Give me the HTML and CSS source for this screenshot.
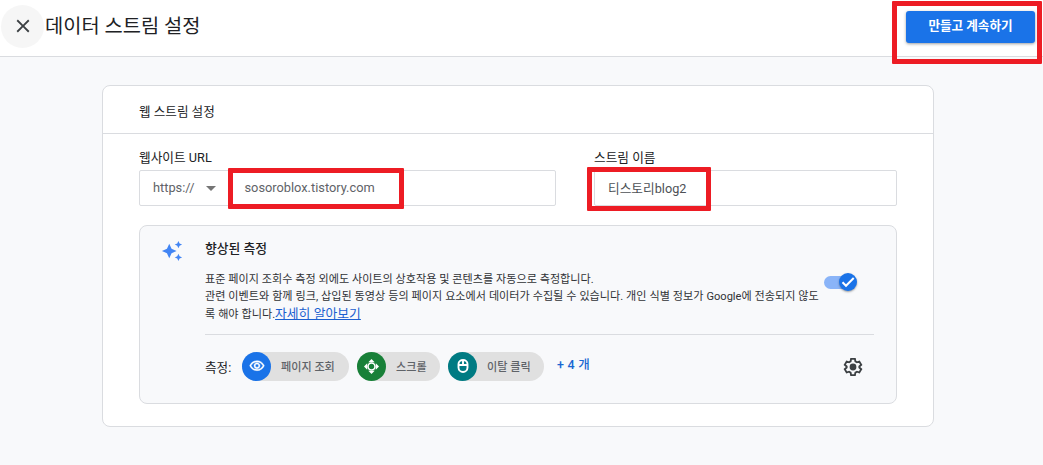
FILE: index.html
```
<!DOCTYPE html>
<html lang="ko">

<head>
    <meta charset="UTF-8">
    <meta name="viewport" content="width=device-width, initial-scale=1.0">
    <title>데이터 스트림 설정</title>
    <link rel="stylesheet" href="styles.css">
</head>

<body>
    <div class="header">
        <button class="closeBtn" aria-label="닫기">
            <svg width="24" height="24" viewBox="0 0 24 24"><path d="M19 6.41L17.59 5 12 10.59 6.41 5 5 6.41 10.59 12 5 17.59 6.41 19 12 13.41 17.59 19 19 17.59 13.41 12z"/></svg>
        </button>
        <h1>데이터 스트림 설정</h1>
        <button class="createBtn">만들고 계속하기<span class="mark markBtn"></span></button>
    </div>

    <div class="card">
        <div class="cardHead">웹 스트림 설정</div>

        <div class="cardBody">
            <div class="fields">
                <div class="field fieldUrl">
                    <label>웹사이트 URL</label>
                    <div class="inputBox">
                        <span class="scheme">https://</span>
                        <span class="arrow"></span>
                        <span class="url">sosoroblox.tistory.com</span>
                        <span class="mark markUrl"></span>
                    </div>
                </div>
                <div class="field fieldName">
                    <label>스트림 이름</label>
                    <div class="inputBox">
                        <span class="streamName">티스토리blog2</span>
                        <span class="mark markName"></span>
                    </div>
                </div>
            </div>

            <div class="panel">
                <svg class="sparkle" width="24" height="24" viewBox="0 0 24 24"><path d="M19 9l1.25-2.75L23 5l-2.75-1.25L19 1l-1.25 2.75L15 5l2.75 1.25L19 9zm-7.5.5L9 4 6.5 9.500 1 12l5.500 2.500L9 20l2.500-5.500L17 12l-5.500-2.500zM19 15l-1.250 2.750L15 19l2.750 1.250L19 23l1.250-2.750L23 19l-2.750-1.250L19 15z"/></svg>

                <div class="panelMain">
                    <div class="desc">
                        <div class="descText">
                            <h4>향상된 측정</h4>
                            <p>표준 페이지 조회수 측정 외에도 사이트의 상호작용 및 콘텐츠를 자동으로 측정합니다.</p>
                            <p class="wide">관련 이벤트와 함께 링크, 삽입된 동영상 등의 페이지 요소에서 데이터가 수집될 수 있습니다. 개인 식별 정보가 Google에 전송되지 않도<br>록 해야 합니다.<a href="#">자세히 알아보기</a></p>
                        </div>
                        <div class="toggle">
                            <span class="knob">
                                <svg width="18" height="18" viewBox="0 0 18 18"><path d="M3.500 9.300L7 12.800 14.700 5"/></svg>
                            </span>
                        </div>
                    </div>

                    <div class="measure">
                        <span class="measureLabel">측정:</span>
                        <div class="chip chipView">
                            <span class="chipIcon blue">
                                <svg width="16" height="16" viewBox="0 0 24 24"><path stroke="white" stroke-width=".6" d="M12 6c3.790 0 7.170 2.130 8.820 5.500C19.170 14.870 15.790 17 12 17s-7.170-2.130-8.820-5.500C4.830 8.130 8.210 6 12 6m0-2C7 4 2.730 7.110 1 11.500 2.730 15.890 7 19 12 19s9.270-3.110 11-7.500C21.270 7.110 17 4 12 4zm0 5a2.500 2.500 0 0 1 0 5 2.500 2.500 0 0 1 0-5m0-2c-2.480 0-4.500 2.020-4.500 4.500S9.520 16 12 16s4.500-2.020 4.500-4.500S14.480 7 12 7z"/></svg>
                            </span>
                            페이지 조회
                        </div>
                        <div class="chip chipScroll">
                            <span class="chipIcon green">
                                <svg width="15" height="15" viewBox="0 0 15 15"><path d="M7.500 0l3.200 3.200H4.300zM15 7.500l-3.200 3.200V4.300zM7.500 15l-3.200-3.200h6.400zM0 7.500l3.200-3.200v6.400z"/><circle cx="7.500" cy="7.500" r="3.500" fill="none" stroke="white" stroke-width="1.600"/></svg>
                            </span>
                            스크롤
                        </div>
                        <div class="chip chipClick">
                            <span class="chipIcon teal">
                                <svg width="12" height="14" viewBox="0 0 12 14"><path fill="none" stroke="white" stroke-width="1.900" d="M1.500 6V5A4.500 4 0 0 1 10.500 5v3.500A4.500 4.500 0 0 1 1.500 8.500zM1.500 6h9M6 1v5"/></svg>
                            </span>
                            이탈 클릭
                        </div>
                        <span class="more">+ 4 개</span>
                        <svg class="gear" width="24" height="24" viewBox="0 0 24 24"><path d="M9.900 3.200h4.200l.5 2.700 1.700 1 2.600-.9 2.100 3.600-2.100 1.800v1.200l2.100 1.800-2.100 3.600-2.600-.9-1.700 1-.5 2.700H9.900l-.5-2.700-1.700-1-2.600.9L3 14.400l2.100-1.800v-1.200L3 9.600 5.100 6l2.600.9 1.700-1z"/><circle cx="12" cy="12" r="3.700"/></svg>
                    </div>
                </div>
            </div>
        </div>
    </div>
</body>

</html>
```
FILE: styles.css
```
* {
    box-sizing: border-box;
}

body {
    margin: 0;
    height: 465px;
    overflow: hidden;
    background-color: #f8f9fb;
    color: #3c4043;
    font-family: Roboto, "Noto Sans CJK KR", sans-serif;
    white-space: nowrap;
}

button {
    padding: 0;
    border: 0;
    font-family: inherit;
}

.header {
    display: flex;
    align-items: center;
    height: 57px;
    padding: 0 8px 3px 1px;
    background-color: white;
    border-bottom: 1px solid #dadce0;
}

.closeBtn {
    display: flex;
    align-items: center;
    justify-content: center;
    width: 43px;
    height: 43px;
    border-radius: 50%;
    background-color: #f6f6f6;
}

.closeBtn svg {
    width: 22px;
    margin-top: -1px;
    fill: #3c4043;
}

.header h1 {
    margin: 1px 0 0 1px;
    font-size: 19.8px;
    font-weight: 400;
    line-height: 28px;
    color: #202124;
}

.createBtn {
    position: relative;
    width: 129px;
    height: 32px;
    margin-left: auto;
    padding-bottom: 4px;
    border-radius: 3px;
    background-color: #1a73e8;
    box-shadow: 0 1px 3px rgba(60, 64, 67, .5);
    color: white;
    font-size: 12.6px;
    font-weight: 700;
}

/* 강조 표시 */
.mark {
    position: absolute;
    border: 5px solid #ed1c24;
    border-radius: 1px;
}

.markBtn {
    top: -10px;
    left: -14px;
    width: 150px;
    height: 63px;
}

.markUrl {
    top: -3px;
    left: 88px;
    width: 176px;
    height: 41px;
}

.markName {
    top: -4px;
    left: -8px;
    width: 124px;
    height: 44px;
}

.card {
    width: 832px;
    height: 342px;
    margin: 28px 0 0 102px;
    border: 1px solid #dadce0;
    border-radius: 8px;
    background-color: white;
}

.cardHead {
    height: 48px;
    padding-left: 36px;
    border-bottom: 1px solid #dadce0;
    font-size: 12.6px;
    line-height: 51px;
    color: #202124;
}

.cardBody {
    padding: 14px 36px 0;
}

.fields {
    display: flex;
    justify-content: space-between;
}

.field label {
    display: block;
    height: 22px;
    font-size: 12.7px;
    line-height: 19px;
    color: #202124;
}

.fieldUrl {
    width: 417px;
}

.fieldName {
    width: 303px;
}

.inputBox {
    position: relative;
    display: flex;
    align-items: center;
    height: 36px;
    padding: 0 0 2px 13px;
    border: 1px solid #dadce0;
    border-radius: 2px;
    font-size: 12.8px;
    color: #5f6368;
}

.streamName {
    font-size: 12.7px;
    color: #4d5156;
}

.arrow {
    margin: 2px 28px 0 12px;
    border: 5px solid transparent;
    border-top-color: #757575;
    border-bottom: 0;
}

.panel {
    display: flex;
    height: 179px;
    margin-top: 19px;
    padding: 14px 22px 0 20px;
    border: 1px solid #dadce0;
    border-radius: 8px;
    background-color: #f8f9fb;
}

.sparkle {
    width: 22px;
    height: 22px;
    margin: 0 22px 0 1px;
    fill: #4285f4;
}

.panelMain {
    flex: 1;
}

.desc {
    display: flex;
    justify-content: space-between;
    height: 95px;
    border-bottom: 1px solid #dadce0;
}

.descText {
    width: 0;
}

.desc h4 {
    margin: 0 0 14px;
    font-size: 12.8px;
    font-weight: 500;
    line-height: 17px;
    color: #202124;
}

.desc p {
    margin: 0;
    font-size: 11.1px;
    line-height: 17px;
    word-spacing: .1px;
    color: #303236;
}

.desc .wide {
    word-spacing: .2px;
}

.desc a {
    font-size: 12.8px;
    color: #1a5fd0;
}

.toggle {
    width: 32px;
    height: 13px;
    margin: 36px 18px 0 0;
    border-radius: 7px;
    background-color: #8ab4f8;
}

.knob {
    display: flex;
    align-items: center;
    justify-content: center;
    width: 18px;
    height: 18px;
    margin: -3px 0 0 15px;
    border-radius: 50%;
    background-color: #1a73e8;
    box-shadow: 0 1px 2px rgba(60, 64, 67, .5);
}

.knob path {
    fill: none;
    stroke: white;
    stroke-width: 2;
}

.measure {
    display: flex;
    align-items: center;
    height: 29px;
    margin-top: 17px;
}

.measureLabel {
    width: 37px;
    font-size: 12.6px;
    color: #202124;
}

.chip {
    display: flex;
    align-items: center;
    height: 29px;
    margin-right: 8px;
    padding-bottom: 2px;
    border-radius: 15px;
    background-color: #e0e0e0;
    font-size: 11.1px;
    font-weight: 500;
    color: #5f6368;
}

.chipView {
    width: 107px;
}

.chipScroll {
    width: 83px;
}

.chipClick {
    width: 96px;
}

.chipIcon {
    display: flex;
    align-items: center;
    justify-content: center;
    width: 29px;
    height: 29px;
    margin: 2px 10px 0 0;
    border-radius: 50%;
}

.chipIcon svg {
    margin-top: -1px;
    fill: white;
}

.blue {
    background-color: #1a73e8;
}

.green {
    background-color: #188038;
}

.teal {
    background-color: #007b83;
}

.more {
    margin: -6px 0 0 5px;
    font-size: 12.5px;
    font-weight: 500;
    word-spacing: .5px;
    color: #1967d2;
}

.gear {
    width: 22px;
    height: 22px;
    margin: 1px 10px 0 auto;
    fill: none;
    stroke: #3c4043;
    stroke-width: 2;
}

.gear circle {
    fill: #3c4043;
    stroke: none;
}
```
